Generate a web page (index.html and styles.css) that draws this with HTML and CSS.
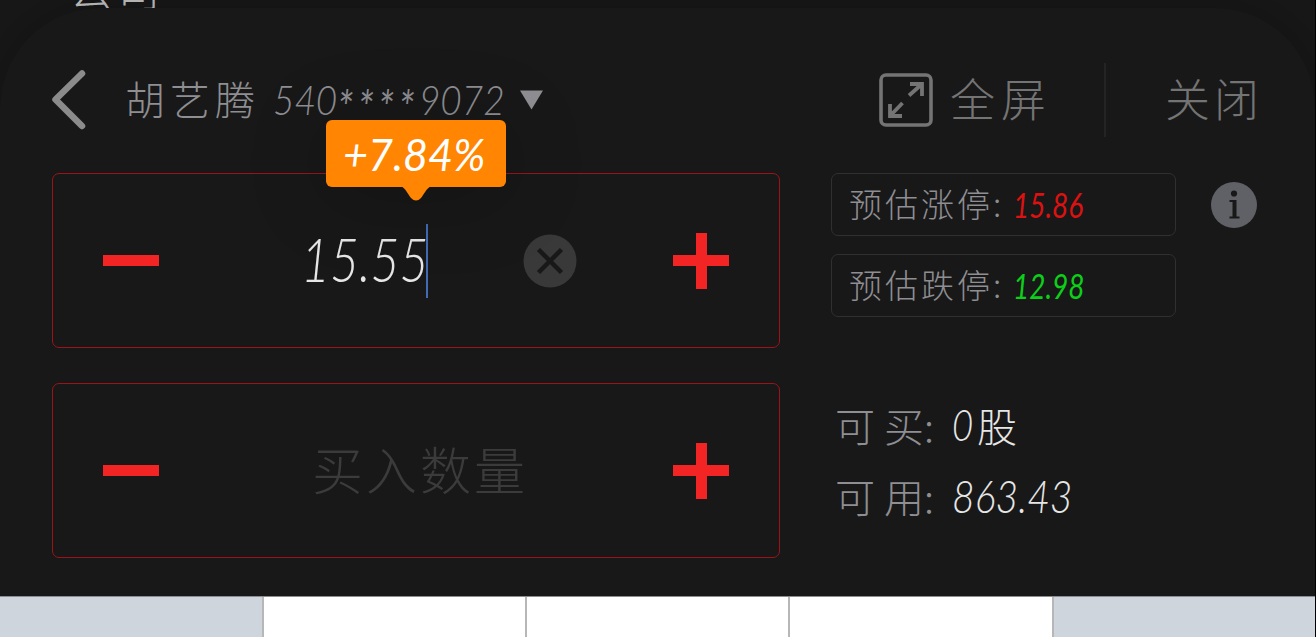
FILE: index.html
```html
<!DOCTYPE html>
<html lang="zh-CN">
<head>
<meta charset="utf-8">
<title>买入</title>
<link rel="stylesheet" href="styles.css">
</head>
<body>
<div class="screen">
  <div class="backdrop">公司</div>
  <main class="sheet">
    <header class="header">
      <svg class="back" width="34" height="60" viewBox="0 0 34 60"><path d="M30 3.5 3.5 29.5 30 56" fill="none" stroke="#8b8b8b" stroke-width="6.5" stroke-linecap="round" stroke-linejoin="round"/></svg>
      <div class="account">
        <span class="name">胡艺腾</span>
        <span class="num acct-no">540<span class="mask">****</span>9072</span>
        <svg class="caret" width="23" height="20" viewBox="0 0 24 20"><path d="M0 0H24L12 20Z" fill="#8e8e93"/></svg>
      </div>
      <div class="full">
        <svg width="54" height="54" viewBox="0 0 54 54" fill="none" stroke="#747474"><rect x="2" y="2" width="50" height="50" rx="5" stroke-width="3.6"/><path d="M30 22.500 43 11M31 11H43V23M23.500 30 11 43M11 31V43H23" stroke-width="3.800"/></svg>
        <span>全屏</span>
      </div>
      <i class="divider"></i>
      <span class="close">关闭</span>
    </header>
    <div class="body">
      <section class="fields">
        <div class="field">
          <i class="sign minus"></i>
          <div class="value"><span class="num price">15.55</span><i class="cursor"></i></div>
          <svg class="clear" width="54" height="54" viewBox="0 0 54 54"><circle cx="27" cy="27" r="26.500" fill="#393939"/><path d="M15.500 15.500 38.500 38.500M38.500 15.500 15.500 38.500" stroke="#181818" stroke-width="4.500"/></svg>
          <i class="sign plus"></i>
          <div class="tip"><span class="num pct">+7.84%</span>
            <svg class="tail" width="30" height="16" viewBox="0 0 30 16"><path d="M0 0H30C26 2 23 8 20 12Q15 17 10 12C7 8 4 2 0 0Z" fill="#ff8503"/></svg>
          </div>
        </div>
        <div class="field second">
          <i class="sign minus"></i>
          <span class="placeholder">买入数量</span>
          <i class="sign plus"></i>
        </div>
      </section>
      <section class="info">
        <div class="limits">
          <div class="limit"><span>预估涨停</span><b>:</b><span class="num up">15.86</span></div>
          <svg class="help" width="46" height="46" viewBox="0 0 46 46"><circle cx="23" cy="23" r="23" fill="#5f6166"/><circle cx="23" cy="11.500" r="3.100" fill="#181818"/><path d="M18.500 18H25.500V34.500H28.500V36.500H18.500V34.500H21.500V20H18.500Z" fill="#181818"/></svg>
          <div class="limit"><span>预估跌停</span><b>:</b><span class="num down">12.98</span></div>
        </div>
        <div class="row first"><span class="label">可买</span><b>:</b><span class="amount"><span class="num zero">0</span>股</span></div>
        <div class="row"><span class="label">可用</span><b>:</b><span class="amount"><span class="num cash">863.43</span></span></div>
      </section>
    </div>
  </main>
  <footer class="keys"><i class="dim"></i><i></i><i></i><i></i><i class="dim"></i></footer>
</div>
</body>
</html>
```
FILE: styles.css
```css
* { box-sizing: border-box; }
body {
  margin: 0;
  background: #181818;
  color: #8e8e93;
  font-family: "Noto Sans CJK SC", sans-serif;
  font-weight: 300;
}
svg { display: block; flex: none; }
b { font-weight: 300; }
.screen {
  position: relative;
  width: 1316px;
  height: 637px;
  overflow: hidden;
  border-right: 1px solid #000;
}
.backdrop {
  position: absolute;
  left: 69px;
  top: -37px;
  color: #c8c8c8;
  font-size: 44px;
  line-height: 50px;
  letter-spacing: 3px;
}
.sheet {
  position: relative;
  height: 588px;
  margin-top: 8px;
  background: #181818;
  border-radius: 100px 100px 0 0;
  box-shadow: 0 0 50px rgba(0, 0, 0, .28);
}
.header {
  display: flex;
  align-items: center;
  height: 129px;
  padding: 55px 52px 0;
}
.account {
  display: flex;
  align-items: center;
  width: 754px;
  margin-left: 39px;
}
.name { width: 148px; padding-bottom: 5px; font-size: 40px; letter-spacing: 5px; line-height: 56px; }
.num {
  display: inline-block;
  flex: none;
  font-family: Lato, sans-serif;
  font-style: italic;
  font-weight: 300;
  line-height: 1;
  white-space: nowrap;
  transform-origin: left center;
}
.acct-no { width: 247px; padding-bottom: 3px; font-size: 42px; transform: scaleX(.88); }
.mask { vertical-align: -9px; font-size: 46px; font-weight: 400; letter-spacing: 5px; line-height: 0; }
.full {
  display: flex;
  align-items: center;
  width: 225px;
  color: #747474;
}
.full span { margin-left: 17px; padding-bottom: 5px; font-size: 45px; letter-spacing: 6px; line-height: 60px; }
.divider { width: 2px; height: 74px; background: #242424; }
.close { margin-left: 59px; padding-bottom: 5px; font-size: 45px; letter-spacing: 4px; line-height: 60px; color: #747474; white-space: nowrap; }
.body { display: flex; padding: 36px 0 0 52px; }
.fields { display: grid; gap: 35px; width: 728px; }
.field {
  position: relative;
  display: flex;
  align-items: center;
  height: 175px;
  padding: 0 50px;
  border: 1px solid #9b1417;
  border-radius: 7px;
}
.sign { position: relative; width: 56px; height: 56px; flex: none; background: linear-gradient(#f32424, #f32424) center / 56px 11px no-repeat; }
.plus { background: linear-gradient(#f32424, #f32424) center / 56px 11px no-repeat, linear-gradient(#f32424, #f32424) center / 11px 56px no-repeat; margin-left: auto; }
.value { display: flex; align-items: center; width: 269px; padding-left: 142px; }
.price { width: 125px; padding-bottom: 5px; font-size: 61px; color: #e6e6e6; transform: scaleX(.82); }
.cursor { width: 2px; height: 74px; flex: none; background: #426bb5; }
.clear { margin-left: 95px; }
.tip {
  position: absolute;
  left: 273px;
  top: -54px;
  display: flex;
  align-items: center;
  width: 180px;
  height: 67px;
  padding-left: 17px;
  color: #fff;
  background: #ff8503;
  border-radius: 6px;
  box-shadow: 0 8px 80px rgba(0, 0, 0, .22);
}
.pct { font-size: 44px; font-weight: 400; transform: scaleX(.98); }
.tail { position: absolute; left: 75px; top: 66px; }
.placeholder { margin-left: 153px; padding-bottom: 5px; font-size: 51px; letter-spacing: 3px; color: #3b3b3b; white-space: nowrap; }
.info { width: 430px; margin-left: 51px; }
.limits { display: grid; grid-template-columns: 345px 46px; column-gap: 35px; row-gap: 18px; align-items: center; }
.limit {
  display: flex;
  align-items: center;
  height: 63px;
  padding: 0 0 3px 17px;
  border: 1px solid #303030;
  border-radius: 7px;
  font-size: 33px;
  letter-spacing: 3px;
}
.limit > b { width: 20px; }
.limit .num { padding-top: 2px; font-size: 35px; font-weight: 400; letter-spacing: 0; transform: scaleX(.8); }
.up { color: #dc1111; }
.down { color: #0dce18; }
.row {
  display: flex;
  align-items: center;
  height: 71px;
  padding: 0 0 4px 4px;
  font-size: 40px;
  white-space: nowrap;
}
.first { margin-top: 74px; }
.label { width: 89px; letter-spacing: 9px; }
.row b { width: 28px; }
.amount { display: flex; align-items: center; color: #e6e6e6; }
.zero { width: 25px; font-size: 43px; transform: scaleX(.85); }
.cash { font-size: 46px; transform: scaleX(.85); }
.keys {
  position: relative;
  display: grid;
  grid-template-columns: 264px 263px 263px 264px 261px;
  height: 41px;
  border-top: 1px solid #8d8d8d;
}
.keys i { background: #fff; border-right: 2px solid #b7b7b7; }
.keys .dim { background: #ced5dd; }
.keys i:last-child { border-right: 0; }
```
